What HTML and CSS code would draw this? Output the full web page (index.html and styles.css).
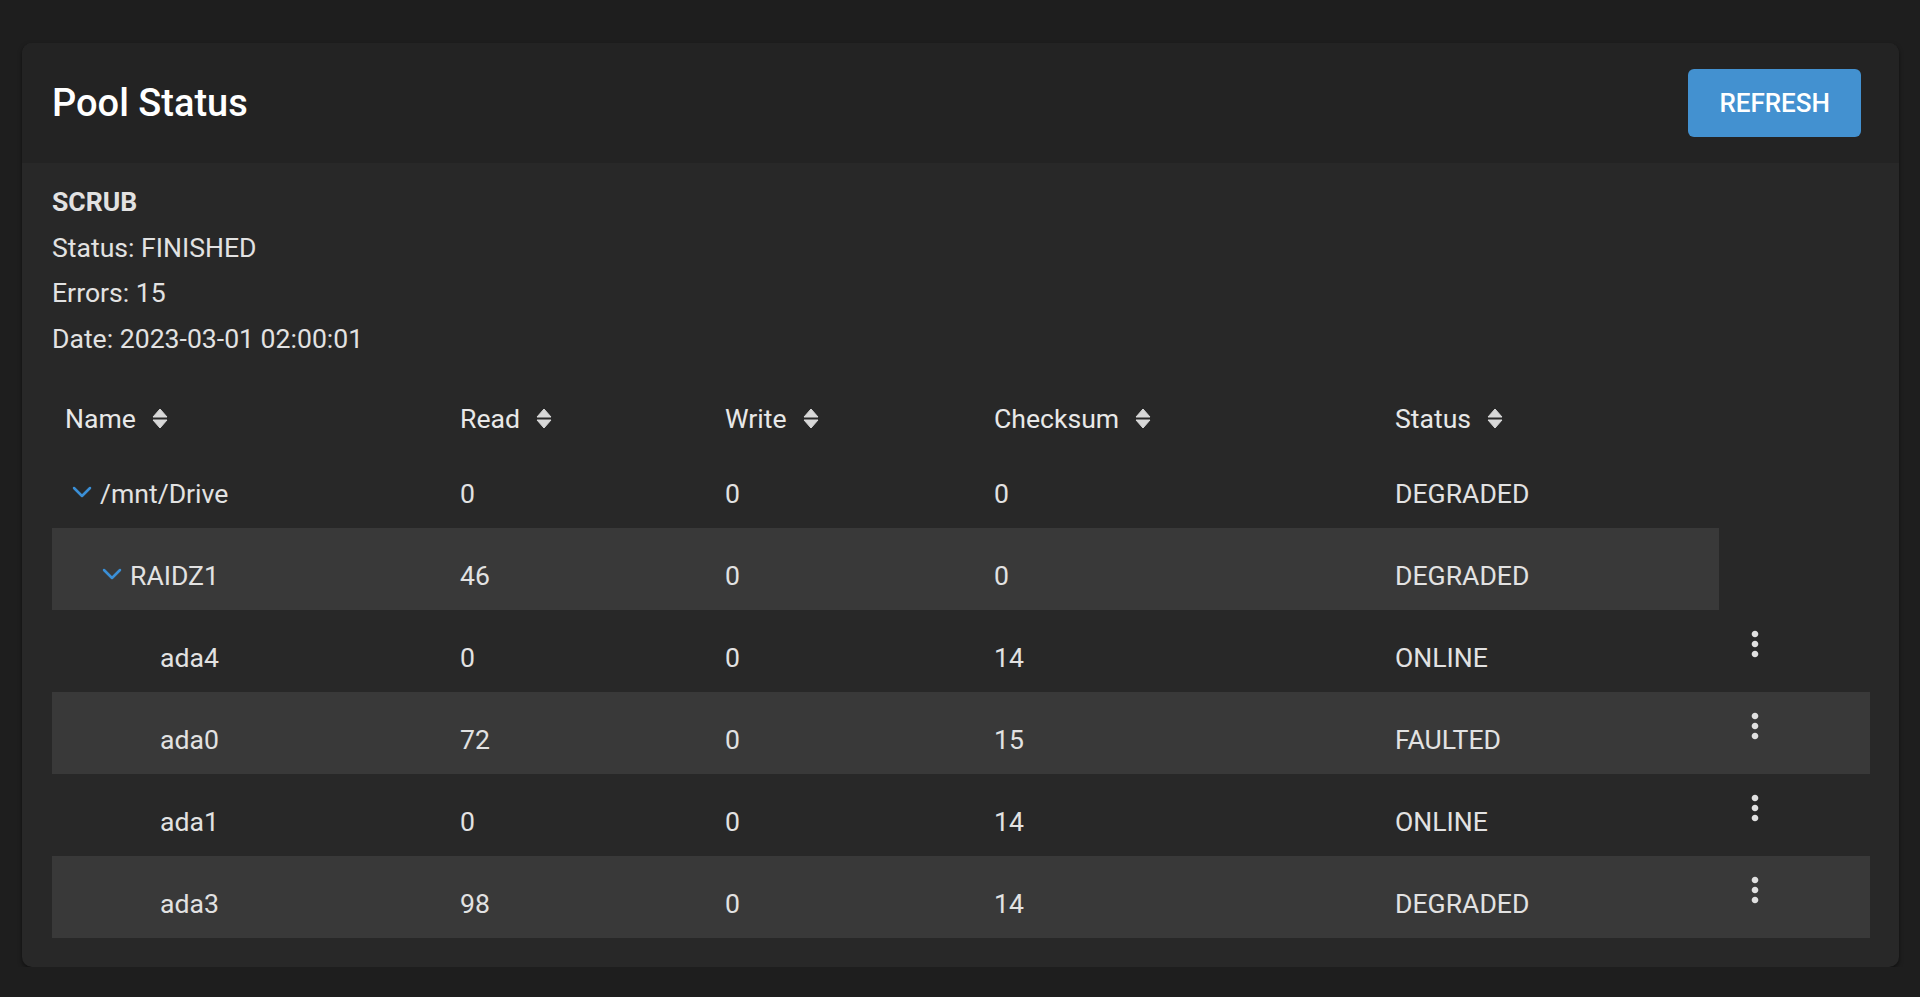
FILE: index.html
```html
<!DOCTYPE html>
<html lang="en">
<head>
  <meta charset="UTF-8" />
  <meta name="viewport" content="width=device-width, initial-scale=1.0" />
  <title>Pool Status</title>
  <link rel="stylesheet" href="styles.css">
</head>
<body>
  <svg class="icon-defs" xmlns="http://www.w3.org/2000/svg">
    <symbol id="i-sort" viewBox="0 0 16 21">
      <path d="M8 1 L15 9 L1 9 Z" />
      <path d="M1 12 L15 12 L8 20 Z" />
    </symbol>
    <symbol id="i-chevron" viewBox="0 0 20 12">
      <polyline points="2,2 10,10 18,2" />
    </symbol>
    <symbol id="i-more" viewBox="0 0 24 24">
      <path d="M12 8c1.1 0 2-.9 2-2s-.9-2-2-2-2 .9-2 2 .9 2 2 2zm0 2c-1.1 0-2 .9-2 2s.9 2 2 2 2-.9 2-2-.9-2-2-2zm0 6c-1.1 0-2 .9-2 2s.9 2 2 2 2-.9 2-2-.9-2-2-2z" />
    </symbol>
  </svg>

  <div class="card">
    <div class="card-header">
      <h1 class="card-title">Pool Status</h1>
      <button class="btn-refresh">REFRESH</button>
    </div>

    <div class="card-body">
      <div class="scrub">
        <div class="scrub-title">SCRUB</div>
        <div>Status: FINISHED</div>
        <div>Errors: 15</div>
        <div>Date: 2023-03-01 02:00:01</div>
      </div>

      <table class="pool-table">
        <colgroup>
          <col class="c-name">
          <col class="c-read">
          <col class="c-write">
          <col class="c-checksum">
          <col class="c-status">
          <col class="c-actions">
        </colgroup>
        <thead>
          <tr>
            <th>Name<svg class="sort"><use href="#i-sort" /></svg></th>
            <th>Read<svg class="sort"><use href="#i-sort" /></svg></th>
            <th>Write<svg class="sort"><use href="#i-sort" /></svg></th>
            <th>Checksum<svg class="sort"><use href="#i-sort" /></svg></th>
            <th>Status<svg class="sort"><use href="#i-sort" /></svg></th>
            <th></th>
          </tr>
        </thead>
        <tbody>
          <tr>
            <td><div class="name lvl-0"><svg class="chevron"><use href="#i-chevron" /></svg>/mnt/Drive</div></td>
            <td>0</td>
            <td>0</td>
            <td>0</td>
            <td>DEGRADED</td>
            <td class="no-fill"></td>
          </tr>
          <tr class="striped">
            <td><div class="name lvl-1"><svg class="chevron"><use href="#i-chevron" /></svg>RAIDZ1</div></td>
            <td>46</td>
            <td>0</td>
            <td>0</td>
            <td>DEGRADED</td>
            <td class="no-fill"></td>
          </tr>
          <tr>
            <td><div class="name lvl-2">ada4</div></td>
            <td>0</td>
            <td>0</td>
            <td>14</td>
            <td>ONLINE</td>
            <td class="actions"><svg class="more"><use href="#i-more" /></svg></td>
          </tr>
          <tr class="striped">
            <td><div class="name lvl-2">ada0</div></td>
            <td>72</td>
            <td>0</td>
            <td>15</td>
            <td>FAULTED</td>
            <td class="actions"><svg class="more"><use href="#i-more" /></svg></td>
          </tr>
          <tr>
            <td><div class="name lvl-2">ada1</div></td>
            <td>0</td>
            <td>0</td>
            <td>14</td>
            <td>ONLINE</td>
            <td class="actions"><svg class="more"><use href="#i-more" /></svg></td>
          </tr>
          <tr class="striped">
            <td><div class="name lvl-2">ada3</div></td>
            <td>98</td>
            <td>0</td>
            <td>14</td>
            <td>DEGRADED</td>
            <td class="actions"><svg class="more"><use href="#i-more" /></svg></td>
          </tr>
        </tbody>
      </table>
    </div>
  </div>
</body>
</html>
```

FILE: styles.css
```css
body {
  margin: 0;
  padding: 43px 21px 0 22px;
  background-color: #1e1e1e;
  font-family: Roboto, "Liberation Sans", sans-serif;
  font-size: 26.6px;
  color: #e2e2e2;
}

.icon-defs {
  position: absolute;
  width: 0;
  height: 0;
  overflow: hidden;
}

.card {
  background-color: #282828;
  border-radius: 10px;
  overflow: hidden;
  box-shadow: 0 2px 4px rgba(0, 0, 0, 0.5);
}

.card-header {
  display: flex;
  align-items: center;
  justify-content: space-between;
  height: 120px;
  padding: 0 38px 0 30px;
  background-color: #232323;
}

.card-title {
  margin: 0;
  font-size: 38px;
  font-weight: 500;
  color: #ffffff;
}

.btn-refresh {
  height: 68px;
  padding: 0 31px;
  border: none;
  border-radius: 6px;
  background-color: #4391d0;
  color: #ffffff;
  font-family: inherit;
  font-size: 26px;
  font-weight: 500;
  cursor: pointer;
}

.card-body {
  padding: 16px 30px 29px;
}

.scrub {
  line-height: 45.5px;
  margin-bottom: 19px;
}

.scrub-title {
  font-weight: 700;
}

.pool-table {
  width: 100%;
  table-layout: fixed;
  border-collapse: collapse;
}

.c-name { width: 395px; }
.c-read { width: 265px; }
.c-write { width: 269px; }
.c-checksum { width: 401px; }
.c-status { width: 337px; }
.c-actions { width: 151px; }

.pool-table th {
  height: 66px;
  padding: 0 0 12px 13px;
  box-sizing: border-box;
  vertical-align: bottom;
  text-align: left;
  font-weight: 400;
  color: #e8e8e8;
}

.sort {
  width: 16px;
  height: 21px;
  margin-left: 16px;
  vertical-align: -1px;
  fill: #d8d8d8;
  stroke: #d8d8d8;
  stroke-width: 1;
  stroke-linejoin: round;
}

.pool-table td {
  height: 82px;
  padding: 12px 0 0 13px;
  box-sizing: border-box;
  vertical-align: middle;
}

.pool-table tr.striped td {
  background-color: #393939;
}

.pool-table tr.striped td.no-fill {
  background-color: transparent;
}

.pool-table td:first-child {
  padding-left: 0;
}

.name {
  white-space: nowrap;
}

.lvl-0 { padding-left: 20px; }
.lvl-1 { padding-left: 50px; }
.lvl-2 { padding-left: 108px; }

.chevron {
  width: 20px;
  height: 12px;
  margin-right: 8px;
  vertical-align: 5px;
  fill: none;
  stroke: #3b8fd6;
  stroke-width: 2.5;
  stroke-linecap: round;
  stroke-linejoin: round;
}

.pool-table td.actions {
  vertical-align: top;
  padding-top: 14px;
  padding-left: 16px;
}

.more {
  display: block;
  width: 40px;
  height: 40px;
  fill: #e0e0e0;
}
```
